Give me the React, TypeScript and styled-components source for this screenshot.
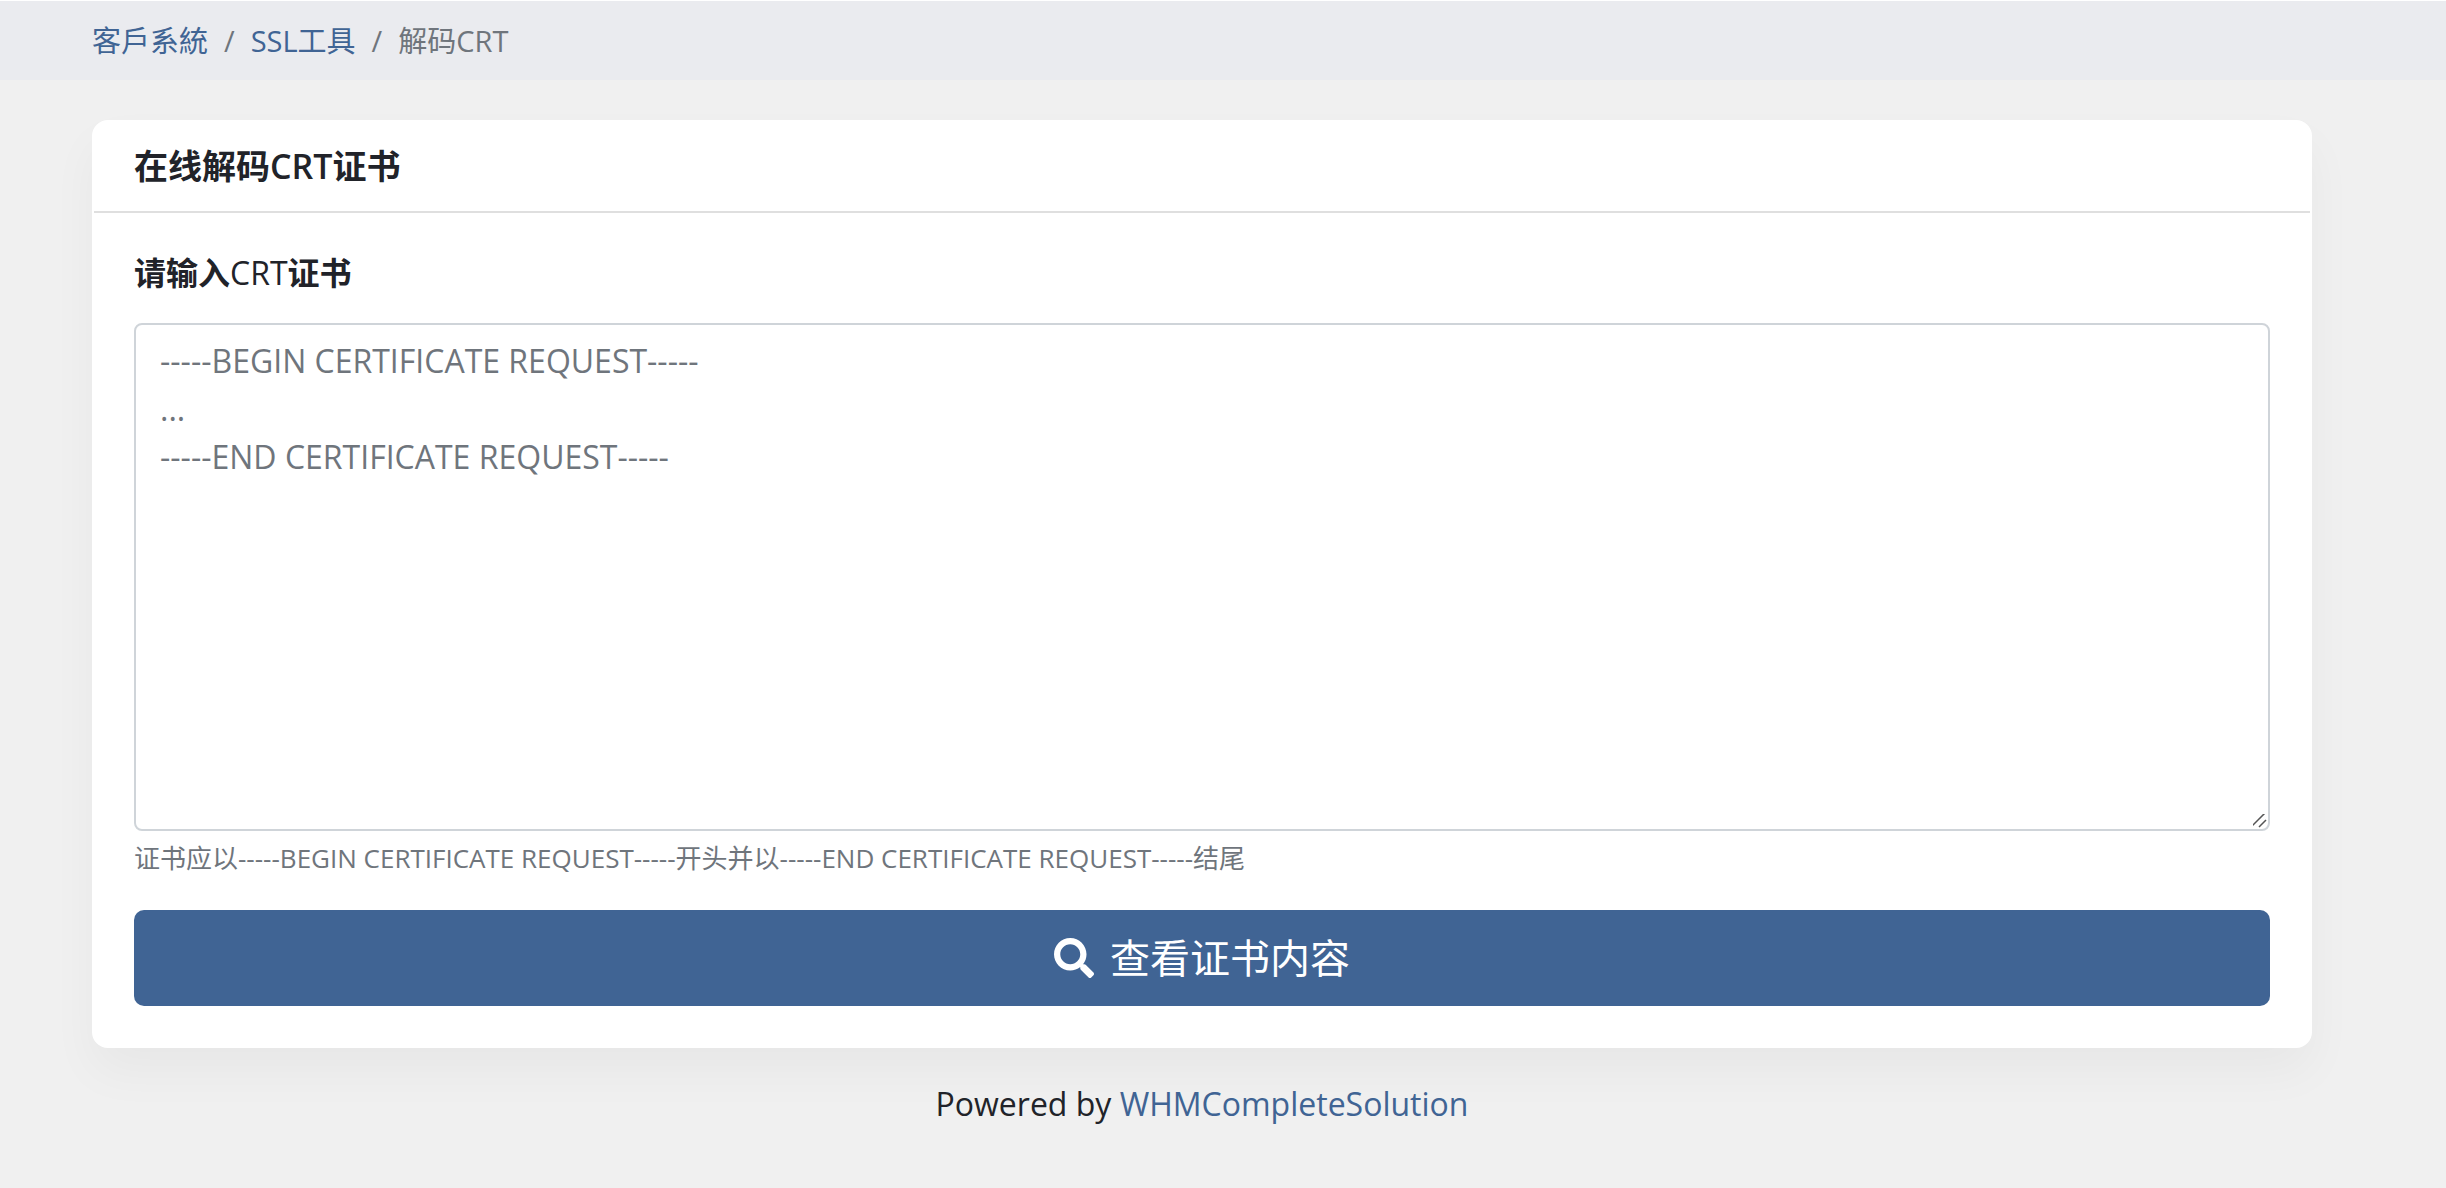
import React from "react";
import styled, { createGlobalStyle } from "styled-components";
import { FaSearch } from "react-icons/fa";

const color = {
  page: "#f0f0f0",
  bar: "#eaebef",
  text: "#212329",
  muted: "#6f757c",
  primary: "#406494",
  field: "#cfd4d9",
  rule: "#dfdfdf",
};

const gripIcon =
  "data:image/svg+xml,%3Csvg xmlns='http://www.w3.org/2000/svg' width='20' height='20'%3E%3Cpath d='M3 18 18 3M11 18l7-7' stroke='%23555' stroke-width='1.5' fill='none'/%3E%3C/svg%3E";

const GlobalStyle = createGlobalStyle`
  *, *::before, *::after { box-sizing: border-box; }
  body {
    margin: 0;
    background: ${color.page};
    color: ${color.text};
    font-family: "Open Sans", "Noto Sans CJK SC", sans-serif;
    font-size: 32px;
    line-height: 48px;
  }
`;

const BreadcrumbBar = styled.nav`
  padding: 18px 134px 18px 92px;
  border-top: 1px solid #fff;
  background: ${color.bar};
`;

const BreadcrumbList = styled.ol`
  display: flex;
  flex-wrap: wrap;
  margin: 0;
  padding: 0;
  list-style: none;
  font-size: 29px;
  line-height: 43px;
`;

const BreadcrumbItem = styled.li`
  color: ${color.muted};

  & + &::before {
    content: "/";
    padding: 0 16px;
  }
`;

const TextLink = styled.a`
  color: ${color.primary};
  text-decoration: none;

  &:hover {
    text-decoration: underline;
  }
`;

const Main = styled.main`
  padding: 40px 134px 0 92px;
`;

const Card = styled.section`
  border: 2px solid #fff;
  border-radius: 16px;
  background: #fff;
  box-shadow: 0 24px 48px rgba(0, 0, 0, 0.04);
`;

const CardHeader = styled.header`
  padding: 20px 40px;
  border-bottom: 2px solid ${color.rule};
`;

const CardTitle = styled.h1`
  margin: 0;
  font-size: 34px;
  font-weight: 600;
  line-height: 49px;
`;

const CardForm = styled.form`
  display: flex;
  flex-direction: column;
  padding: 36px 40px 40px;
`;

const FieldLabel = styled.label`
  margin-bottom: 26px;
`;

const LabelStrong = styled.strong`
  font-weight: 600;
`;

const CertificateInput = styled.textarea`
  display: block;
  width: 100%;
  padding: 12px 24px;
  border: 2px solid ${color.field};
  border-radius: 8px;
  background: #fff;
  color: ${color.text};
  font: inherit;
  resize: vertical;

  &::placeholder {
    color: ${color.muted};
    opacity: 1;
  }

  &::-webkit-scrollbar {
    width: 20px;
    height: 20px;
  }

  &::-webkit-resizer {
    background: url("${gripIcon}") no-repeat right bottom;
  }
`;

const HelpText = styled.small`
  margin: 8px 0 32px;
  color: ${color.muted};
  font-size: 26px;
  line-height: 39px;
`;

const SubmitButton = styled.button`
  display: flex;
  align-items: center;
  justify-content: center;
  gap: 16px;
  width: 100%;
  padding: 18px 32px;
  border: 0;
  border-radius: 10px;
  background: ${color.primary};
  color: #fff;
  font: inherit;
  font-size: 40px;
  line-height: 60px;
  cursor: pointer;
`;

const Footer = styled.footer`
  padding: 32px 134px 60px 92px;
  text-align: center;
`;

export default function App() {
  return (
    <>
      <GlobalStyle />
      <BreadcrumbBar aria-label="breadcrumb">
        <BreadcrumbList>
          <BreadcrumbItem>
            <TextLink href="#home" lang="zh-Hant">客戶系統</TextLink>
          </BreadcrumbItem>
          <BreadcrumbItem>
            <TextLink href="#ssl">SSL工具</TextLink>
          </BreadcrumbItem>
          <BreadcrumbItem aria-current="page">解码CRT</BreadcrumbItem>
        </BreadcrumbList>
      </BreadcrumbBar>
      <Main>
        <Card>
          <CardHeader>
            <CardTitle>在线解码CRT证书</CardTitle>
          </CardHeader>
          <CardForm onSubmit={(event) => event.preventDefault()}>
            <FieldLabel htmlFor="certificate">
              <LabelStrong>请输入</LabelStrong>CRT<LabelStrong>证书</LabelStrong>
            </FieldLabel>
            <CertificateInput
              id="certificate"
              rows={10}
              aria-describedby="certificate-help"
              placeholder={
                "-----BEGIN CERTIFICATE REQUEST-----\n...\n-----END CERTIFICATE REQUEST-----"
              }
            />
            <HelpText id="certificate-help">
              证书应以-----BEGIN CERTIFICATE REQUEST-----开头并以-----END CERTIFICATE REQUEST-----结尾
            </HelpText>
            <SubmitButton type="submit">
              <FaSearch aria-hidden="true" />
              查看证书内容
            </SubmitButton>
          </CardForm>
        </Card>
      </Main>
      <Footer>
        Powered by <TextLink href="#whmcs">WHMCompleteSolution</TextLink>
      </Footer>
    </>
  );
}
